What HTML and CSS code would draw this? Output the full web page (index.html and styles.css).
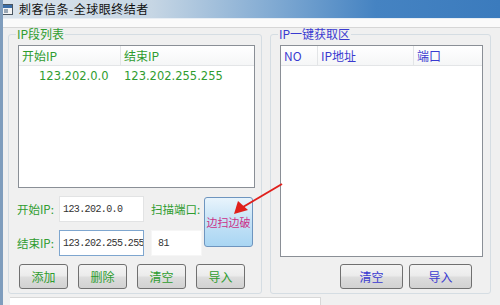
FILE: index.html
```html
<!DOCTYPE html>
<html>
	<head>
		<meta charset="utf-8">
		<title>刺客信条-全球眼终结者</title>
		<link rel="stylesheet" href="styles.css">
	</head>
	<body>
		<div class="window">
			<div class="titlebar">
				<svg class="app-icon" width="11" height="11" viewBox="0 0 11 11">
					<rect x="0.5" y="0.5" width="10" height="10" fill="#f4f4f4" stroke="#4a5560"/>
					<rect x="1" y="1" width="9" height="3" fill="#3b6ea8"/>
					<rect x="2" y="5" width="4" height="4" fill="#9aa8b6"/>
				</svg>
				<span class="title">刺客信条-全球眼终结者</span>
			</div>
			<div class="menustrip"></div>
			<div class="content">
				<fieldset class="group group-left">
					<legend class="green">IP段列表</legend>
					<div class="listview">
						<div class="lv-head green">
							<div class="col-start">开始IP</div>
							<div class="col-end">结束IP</div>
						</div>
						<div class="lv-row green">
							<div class="col-start cell-start">123.202.0.0</div>
							<div class="col-end">123.202.255.255</div>
						</div>
					</div>
					<div class="form">
						<label class="lbl green">开始IP:</label>
						<div class="input">123.202.0.0</div>
						<label class="lbl green">扫描端口:</label>
						<button class="scan-btn">边扫边破</button>
						<label class="lbl green">结束IP:</label>
						<div class="input focused">123.202.255.255<span class="caret"></span></div>
						<div class="input port">81</div>
					</div>
					<div class="btnrow">
						<button class="btn green">添加</button>
						<button class="btn green">删除</button>
						<button class="btn green">清空</button>
						<button class="btn green">导入</button>
					</div>
				</fieldset>
				<fieldset class="group group-right">
					<legend class="blue">IP一键获取区</legend>
					<div class="listview lv-right">
						<div class="lv-head blue">
							<div class="col-no">NO</div>
							<div class="col-ip">IP地址</div>
							<div class="col-port">端口</div>
						</div>
					</div>
					<div class="btnrow btnrow-right">
						<button class="btn btn-wide blue">清空</button>
						<button class="btn btn-wide blue">导入</button>
					</div>
				</fieldset>
			</div>
			<div class="statusbox"></div>
			<svg class="arrow" width="500" height="305" viewBox="0 0 500 305">
				<line x1="282" y1="184" x2="243" y2="207" stroke="#e0201c" stroke-width="2"/>
				<polygon points="234,214 238,201 248,210" fill="#e0201c"/>
			</svg>
		</div>
	</body>
</html>
```
FILE: styles.css
```css
*{
	margin:0;
	padding:0;
	box-sizing:border-box;
}
body{
	width:500px;
	height:305px;
	overflow:hidden;
	font-family:"Noto Sans CJK SC", "Liberation Sans", sans-serif;
	font-size:12px;
}
.window{
	position:relative;
	width:500px;
	height:305px;
	background-color:#f0f0f0;
	border-left:3px solid #7f9dbd;
	overflow:hidden;
}
.titlebar{
	height:18px;
	display:flex;
	align-items:center;
	gap:6px;
	background:linear-gradient(to right, #dbe4ec 0%, #c6d6e4 30%, #7fa9d2 55%, #4583c2 75%, #3b7bbd 100%);
}
.title{
	color:#111;
	font-size:12px;
	line-height:18px;
	letter-spacing:0.5px;
}
.app-icon{
	display:block;
	margin-left:-1px;
}
.menustrip{
	height:10px;
	background-color:#fafafa;
	border-top:1px solid #e8eef4;
	border-bottom:1px solid #d6d6d6;
}
.content{
	display:flex;
	gap:8px;
	padding-left:5px;
}
.green{
	color:#2f9c2f;
}
.blue{
	color:#3a3ad0;
}
.group{
	border:1px solid #d5dde3;
	border-radius:3px;
	height:266px;
}
.group legend{
	margin-left:-2px;
	padding:0 1px;
	font-size:12px;
	line-height:12px;
}
.group-left{
	width:254px;
	padding:5px 0 0 9px;
}
.group-right{
	width:221px;
	padding:5px 0 0 9px;
}
.listview{
	width:237px;
	height:143px;
	background-color:#fff;
	border:1px solid #8a8f96;
}
.lv-right{
	width:203px;
	height:212px;
}
.lv-head{
	display:flex;
	height:20px;
	line-height:19px;
	background:linear-gradient(#ffffff, #f5f6f7);
	border-bottom:1px solid #e3e5e7;
}
.lv-head > div{
	border-right:1px solid #e3e5e7;
	padding-left:3px;
}
.col-start{
	width:102px;
}
.col-end{
	flex:1;
}
.lv-head > .col-end{
	border-right:none;
}
.lv-row{
	display:flex;
	height:20px;
	line-height:20px;
	font-family:"DejaVu Sans", sans-serif;
	font-size:11.5px;
}
.cell-start{
	padding-left:20px;
}
.lv-row .col-end{
	padding-left:3px;
}
.col-no{
	width:37px;
}
.col-ip{
	width:96px;
}
.col-port{
	flex:1;
}
.lv-head > .col-port{
	border-right:none;
}
.form{
	display:grid;
	grid-template-columns:42px 85px 7px 51px 50px;
	grid-template-rows:26px 26px;
	row-gap:8px;
	margin-top:8px;
	margin-left:-1px;
}
.lbl{
	display:flex;
	align-items:center;
	white-space:nowrap;
	font-size:11.5px;
}
.input{
	height:26px;
	background-color:#fff;
	border:1px solid #e2e3e4;
	padding-left:3px;
	font-family:"Liberation Mono", monospace;
	font-size:10px;
	letter-spacing:-0.6px;
	color:#333;
	display:flex;
	align-items:center;
	white-space:nowrap;
	overflow:hidden;
}
.form > .lbl:nth-of-type(1){
	grid-column:1;
	grid-row:1;
}
.form > .input:nth-of-type(1){
	grid-column:2;
	grid-row:1;
}
.form > .lbl:nth-of-type(2){
	grid-column:4;
	grid-row:1;
}
.form > .lbl:nth-of-type(3){
	grid-column:1;
	grid-row:2;
}
.form > .focused{
	grid-column:2;
	grid-row:2;
	border-color:#7ea6cf;
}
.form > .port{
	grid-column:4;
	grid-row:2;
	border-color:#f6f6f6;
	padding-left:6px;
}
.caret{
	display:inline-block;
	width:1px;
	height:13px;
	background-color:#222;
	margin-left:1px;
}
.scan-btn{
	grid-column:5;
	grid-row:1 / span 2;
	width:49px;
	height:50px;
	margin-left:2px;
	margin-top:1px;
	padding:0;
	white-space:nowrap;
	border:1px solid #6e95bf;
	border-radius:3px;
	background:linear-gradient(#e8f4fc, #c4e2f6 50%, #a9d6f3);
	color:#cc2f86;
	font-family:"Noto Sans CJK SC", sans-serif;
	font-size:11px;
}
.btnrow{
	display:flex;
	gap:10px;
	margin-top:8px;
	margin-left:1px;
}
.btn{
	width:49px;
	height:25px;
	padding:0;
	border:1px solid #707070;
	border-radius:3px;
	background:linear-gradient(#f4f4f4 0%, #ececec 45%, #dcdcdc 55%, #d2d2d2 100%);
	font-family:"Noto Sans CJK SC", sans-serif;
	font-size:12px;
}
.btn-wide{
	width:63px;
}
.btnrow-right{
	justify-content:flex-end;
	gap:6px;
	margin-top:7px;
	margin-right:18px;
}
.statusbox{
	width:311px;
	height:12px;
	margin-top:3px;
	margin-left:7px;
	background-color:#fff;
	border-top:1px solid #d8d8d8;
	border-right:1px solid #d8d8d8;
}
.arrow{
	position:absolute;
	left:-3px;
	top:0;
	pointer-events:none;
}
```
